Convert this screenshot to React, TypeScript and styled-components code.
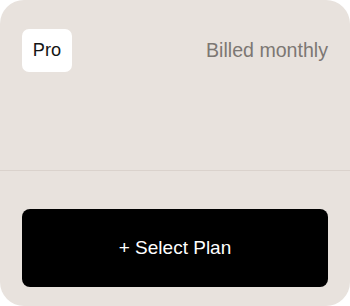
import React from "react";
import styled, { createGlobalStyle } from "styled-components";

const GlobalStyles = createGlobalStyle`
  html,
  body {
    margin: 0;
    background: #ffffff;
  }

  body {
    font-family: "Liberation Sans", Arial, sans-serif;
  }
`;

const Card = styled.div`
  width: 350px;
  height: 306px;
  box-sizing: border-box;
  background: #e8e2dd;
  border-radius: 24px;
  display: flex;
  flex-direction: column;
  overflow: hidden;
`;

const Header = styled.div`
  height: 170px;
  box-sizing: border-box;
  padding: 29px 22px 0 22px;
  display: flex;
  justify-content: space-between;
  align-items: flex-start;
`;

const Badge = styled.span`
  width: 50px;
  height: 43px;
  box-sizing: border-box;
  display: flex;
  align-items: center;
  justify-content: center;
  background: #ffffff;
  border-radius: 7px;
  color: #141414;
  font-size: 18.2px;
`;

const Billing = styled.span`
  height: 43px;
  display: flex;
  align-items: center;
  color: #7c7773;
  font-size: 19.6px;
`;

const Divider = styled.hr`
  margin: 0;
  border: none;
  height: 1px;
  background: #dad2cc;
`;

const Footer = styled.div`
  flex: 1;
  padding: 38px 22px 19px;
  display: flex;
`;

const SelectButton = styled.button`
  flex: 1;
  border: none;
  border-radius: 8px;
  background: #000000;
  color: #ffffff;
  font-family: inherit;
  font-size: 19px;
  cursor: pointer;
`;

const App: React.FC = () => {
  return (
    <Card>
      <GlobalStyles />
      <Header>
        <Badge>Pro</Badge>
        <Billing>Billed monthly</Billing>
      </Header>
      <Divider />
      <Footer>
        <SelectButton>+ Select Plan</SelectButton>
      </Footer>
    </Card>
  );
};

export default App;
